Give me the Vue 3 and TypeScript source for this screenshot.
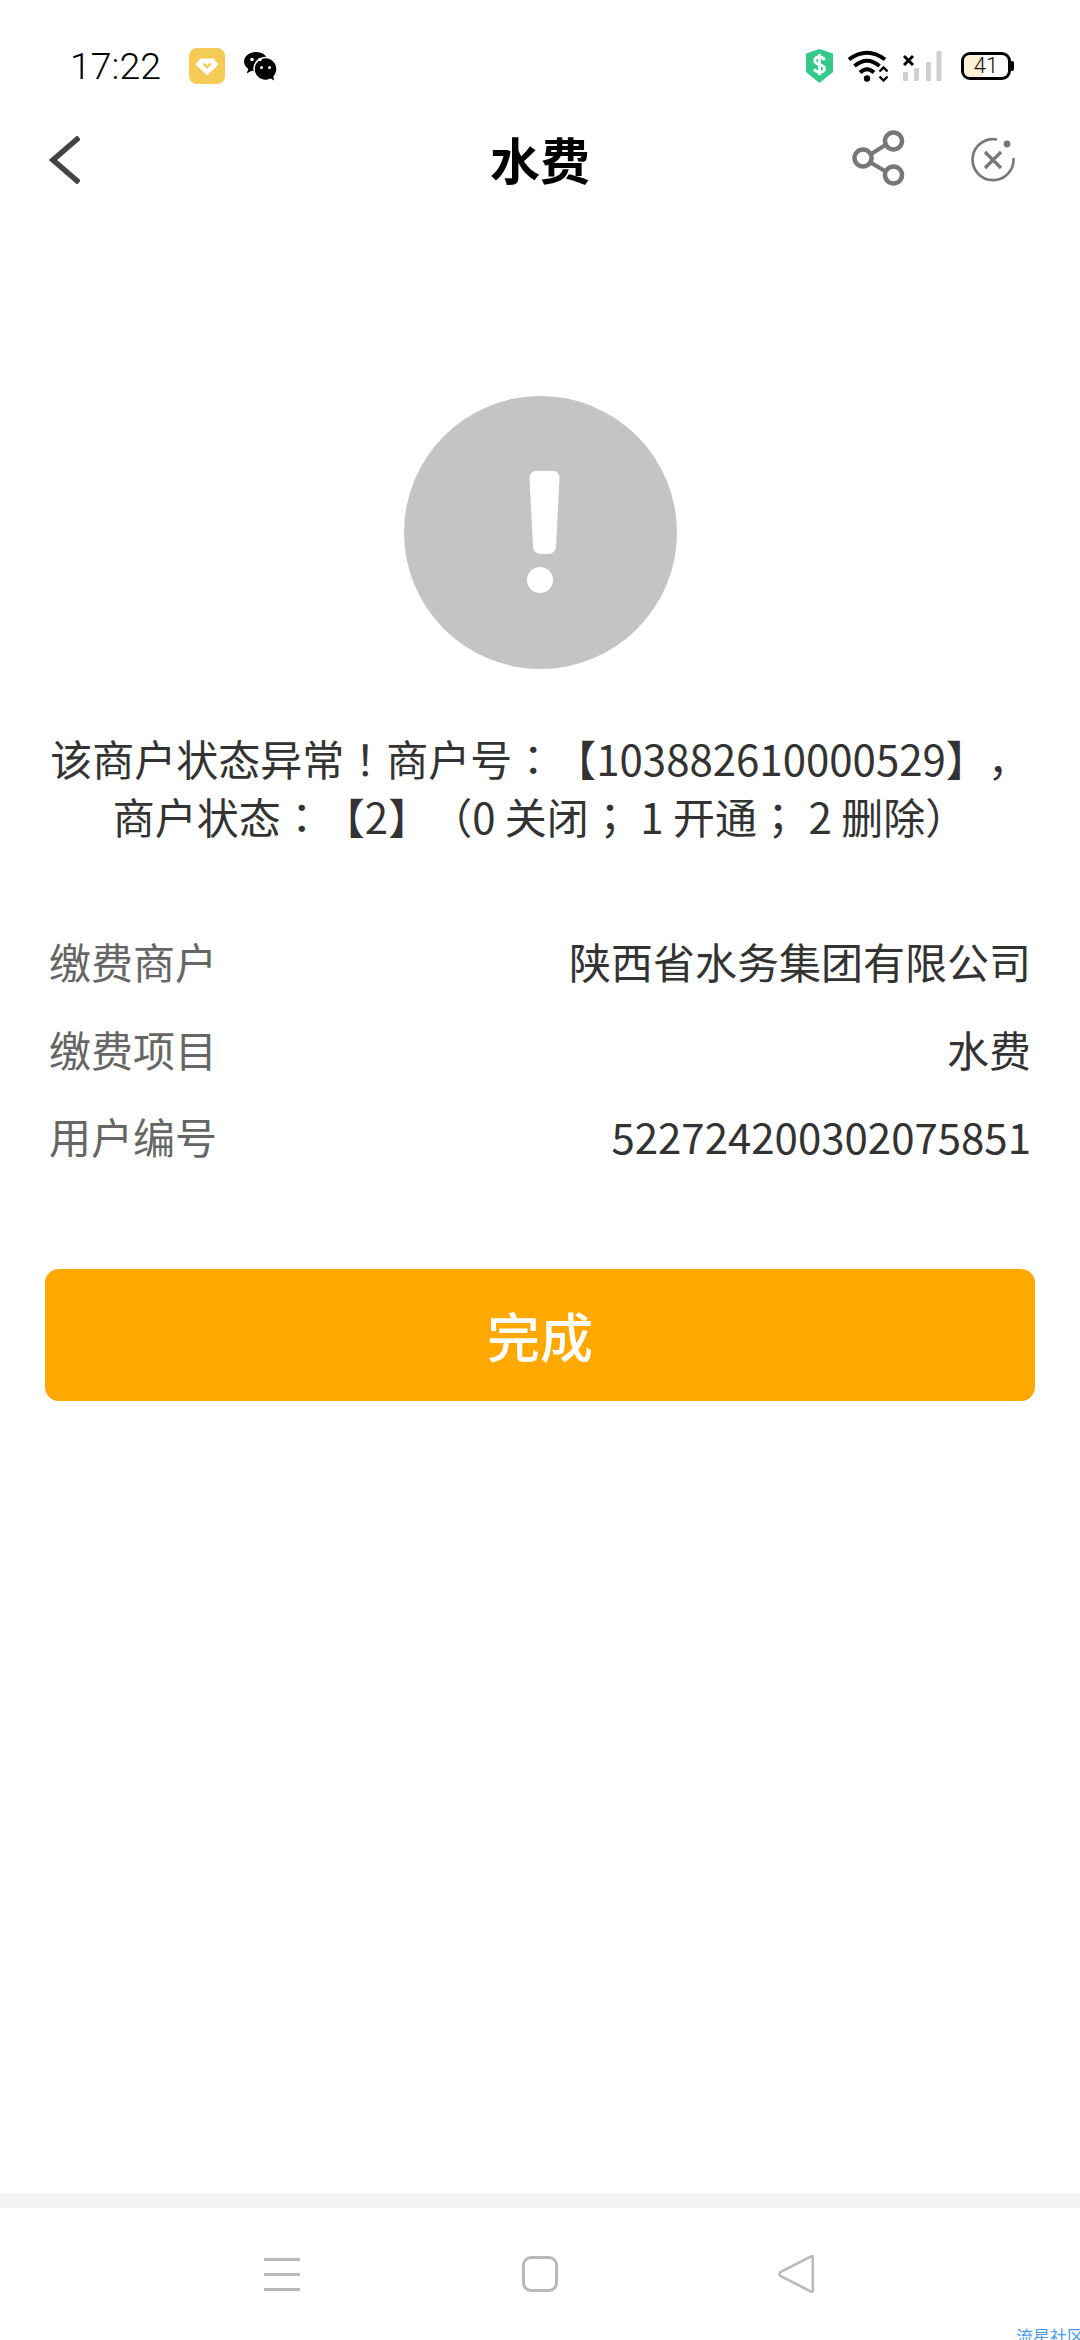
<script setup lang="ts">
const rows: { label: string; value: string }[] = [
  { label: '缴费商户', value: '陕西省水务集团有限公司' },
  { label: '缴费项目', value: '水费' },
  { label: '用户编号', value: '522724200302075851' },
]
</script>

<template>
  <div class="page">
    <div class="status">
      <span class="time">17:22</span>
      <svg class="app-icon" width="36" height="36" viewBox="0 0 36 36">
        <rect width="36" height="36" rx="8" fill="#f4cb55" />
        <path d="M11.5 10.5h13l5 6L18 27.5 6.5 16.5z" fill="#fff" />
        <path d="M14.5 15.5l3.5 3.5 3.5-3.5" fill="none" stroke="#f4cb55" stroke-width="2.4" />
      </svg>
      <svg class="wechat" width="34" height="30" viewBox="0 0 34 30">
        <path d="M13 1C6.4 1 1 5.300 1 10.600c0 3 1.700 5.600 4.400 7.400L3.500 22.500l5.200-2.800c1.400.4 2.800.6 4.300.6 6.600 0 12-4.300 12-9.700S19.600 1 13 1z" fill="#000" />
        <circle cx="22.500" cy="18" r="11.500" fill="#000" stroke="#fff" stroke-width="1.500" />
        <path d="M27 27l4 2.500-.8-5z" fill="#000" />
        <circle cx="9" cy="8.500" r="1.800" fill="#fff" />
        <circle cx="17" cy="8.500" r="1.800" fill="#fff" />
        <circle cx="18.500" cy="16.500" r="1.500" fill="#fff" />
        <circle cx="26.500" cy="16.500" r="1.500" fill="#fff" />
      </svg>
      <span class="grow"></span>
      <svg class="shield" width="27" height="34" viewBox="0 0 27 34">
        <path d="M13.500 0L27 4.500V23L13.500 34 0 23V4.500z" fill="#34c98a" />
        <path d="M18.500 11c-1-2-2.800-3-5-3-2.800 0-4.700 1.400-4.700 3.700 0 5 9.700 2.800 9.700 7.800 0 2.400-2 3.700-5 3.700-2.400 0-4.300-1.100-5.300-3M13.500 5v21" fill="none" stroke="#fff" stroke-width="2.800" />
      </svg>
      <svg class="wifi" width="40" height="32" viewBox="0 0 40 32">
        <path d="M1 9.500Q19 -4 37 9.500" fill="none" stroke="#000" stroke-width="4" />
        <path d="M6.500 16Q19 5.500 31.500 16" fill="none" stroke="#000" stroke-width="4" />
        <path d="M12 22.500Q19 16 26 22.500" fill="none" stroke="#000" stroke-width="4" />
        <circle cx="19" cy="28.500" r="3.200" fill="#000" />
        <path d="M31.500 21.500l4-4 4 4M31.500 26.500l4 4 4-4" fill="none" stroke="#000" stroke-width="2.400" />
      </svg>
      <svg class="signal" width="40" height="30" viewBox="0 0 40 30">
        <path d="M1 5l9 9M10 5l-9 9" stroke="#000" stroke-width="3" />
        <rect x="0" y="21" width="5" height="9" rx="1" fill="#cfcfcf" />
        <rect x="11" y="17" width="5" height="13" rx="1" fill="#cfcfcf" />
        <rect x="23" y="11" width="5" height="19" rx="1" fill="#cfcfcf" />
        <rect x="33.500" y="0" width="5" height="30" rx="1" fill="#cfcfcf" />
      </svg>
      <div class="battery">
        <span class="battery-fill"></span>
        <span class="battery-text">41</span>
      </div>
    </div>

    <div class="nav">
      <svg class="back" width="31" height="48" viewBox="0 0 31 48">
        <path d="M30 1.500L4 24l26 22.500" fill="none" stroke="#444" stroke-width="5.500" />
      </svg>
      <h1 class="title">水费</h1>
      <svg class="share" width="53" height="56" viewBox="0 0 53 56">
        <path d="M16 26L38 12M16 31l22 13" stroke="#777" stroke-width="4" />
        <circle cx="41.500" cy="11" r="8.500" fill="#fff" stroke="#777" stroke-width="4.500" />
        <circle cx="11" cy="28" r="8.500" fill="#fff" stroke="#777" stroke-width="4.500" />
        <circle cx="41.500" cy="45" r="8.500" fill="#fff" stroke="#777" stroke-width="4.500" />
      </svg>
      <svg class="close" width="46" height="46" viewBox="0 0 46 46">
        <path d="M27 2.500A20.500 20.500 0 1 0 43.500 21" fill="none" stroke="#777" stroke-width="2.600" />
        <path d="M15 15l16 16M31 15L15 31" stroke="#777" stroke-width="3.200" />
        <circle cx="37" cy="7" r="3.400" fill="#777" />
      </svg>
    </div>

    <div class="alert">
      <svg width="273" height="273" viewBox="0 0 273 273">
        <circle cx="136.500" cy="136.500" r="136.500" fill="#c4c4c4" />
        <path d="M132 75h17a6.500 6.500 0 0 1 6.500 7l-3.500 69a7.500 7.500 0 0 1-7.500 7h-8a7.500 7.500 0 0 1-7.500-7l-3.500-69a6.500 6.500 0 0 1 6.500-7z" fill="#fff" />
        <circle cx="136" cy="184" r="13" fill="#fff" />
      </svg>
    </div>

    <p class="message">该商户状态异常<span class="cp">！</span>商户号<span class="cp">：</span>【103882610000529】，商户状态<span class="cp">：</span>【2】（0 关闭<span class="cp">；</span> 1 开通<span class="cp">；</span> 2 删除）</p>

    <div class="rows">
      <div v-for="row in rows" :key="row.label" class="row">
        <span class="label">{{ row.label }}</span>
        <span class="value">{{ row.value }}</span>
      </div>
    </div>

    <button class="done" type="button">完成</button>

    <div class="grow"></div>
    <div class="divider"></div>

    <div class="sysnav">
      <div class="menu"><i></i><i></i><i></i></div>
      <div class="home"></div>
      <svg class="tri" width="36" height="40" viewBox="0 0 36 40">
        <path d="M33 2.500c1-.8 1.800-.3 1.800 1v33c0 1.300-.8 1.800-1.800 1L2.500 22c-1.300-1.200-1.300-2.800 0-4z" fill="none" stroke="#bababa" stroke-width="2.600" />
      </svg>
      <span class="watermark">流星社区</span>
    </div>
  </div>
</template>

<style scoped>
.page {
  position: relative;
  width: 1080px;
  height: 2340px;
  display: flex;
  flex-direction: column;
  overflow: hidden;
  background: #fff;
  font-family: "Noto Sans CJK SC", "Noto Sans", sans-serif;
  color: #333;
  text-spacing-trim: space-all;
}
.grow {
  flex: 1;
}
.status {
  height: 36px;
  padding: 48px 69px 0 70px;
  display: flex;
  align-items: center;
  flex: none;
}
.time {
  font-family: Roboto, sans-serif;
  font-size: 37.500px;
  font-weight: 300;
  color: #000;
  line-height: 36px;
  width: 92px;
  white-space: nowrap;
}
.app-icon {
  margin-left: 27px;
}
.wechat {
  margin-left: 18px;
}
.wifi {
  margin-left: 15px;
}
.signal {
  margin-left: 15px;
}
.battery {
  position: relative;
  margin-left: 18px;
  width: 44px;
  height: 22px;
  border: 3.500px solid #000;
  border-radius: 9px;
  display: flex;
  align-items: center;
  justify-content: center;
}
.battery::after {
  content: "";
  position: absolute;
  right: -6px;
  top: 6px;
  width: 3px;
  height: 10px;
  background: #000;
  border-radius: 0 2px 2px 0;
}
.battery-fill {
  position: absolute;
  left: 0;
  top: 0;
  bottom: 0;
  width: 41%;
  background: #fdf0d5;
  border-radius: 6px 0 0 6px;
}
.battery-text {
  position: relative;
  font-family: Roboto, sans-serif;
  font-size: 22px;
  font-weight: 300;
  line-height: 22px;
  color: #111;
}
.nav {
  position: relative;
  height: 152px;
  flex: none;
  display: flex;
  align-items: center;
  padding: 0 64px 0 49px;
}
.title {
  position: absolute;
  left: 0;
  right: 0;
  top: 0;
  margin: 0;
  line-height: 148px;
  text-align: center;
  font-size: 50px;
  font-weight: 700;
  color: #000;
}
.back {
  margin-right: auto;
}
.close {
  margin-left: 65px;
}
.share {
  margin-top: -4px;
}
.alert {
  margin-top: 160px;
  height: 273px;
  display: flex;
  justify-content: center;
  flex: none;
}
.message {
  margin: 60px 0 0;
  padding: 0 45px;
  font-size: 42px;
  line-height: 58px;
  text-align: center;
  color: #333;
  flex: none;
}
.cp {
  font-family: "Noto Sans CJK TC", sans-serif;
}
.rows {
  margin-top: 72px;
  padding: 0 49px;
  flex: none;
}
.row {
  height: 87.500px;
  display: flex;
  align-items: center;
  justify-content: space-between;
  font-size: 42px;
}
.label {
  color: #666;
}
.value {
  color: #333;
}
.done {
  margin: 89.500px 45px 0;
  height: 132px;
  flex: none;
  border: 0;
  border-radius: 14px;
  background: #ffa800;
  color: #fff;
  font-family: inherit;
  font-size: 53px;
  font-weight: 500;
}
.divider {
  height: 15px;
  background: #f4f4f4;
  flex: none;
}
.sysnav {
  position: relative;
  height: 132px;
  flex: none;
  display: flex;
  align-items: center;
  padding-left: 264px;
}
.menu {
  width: 36px;
  height: 33px;
  display: flex;
  flex-direction: column;
  justify-content: space-between;
}
.menu i {
  display: block;
  height: 3px;
  background: #b8b8b8;
}
.home {
  margin-left: 222px;
  width: 30px;
  height: 30px;
  border: 3px solid #bababa;
  border-radius: 9px;
}
.tri {
  margin-left: 220px;
}
.watermark {
  position: absolute;
  left: 1016px;
  top: 116px;
  font-size: 17px;
  line-height: 24px;
  white-space: nowrap;
  color: #4a9be0;
}
</style>
